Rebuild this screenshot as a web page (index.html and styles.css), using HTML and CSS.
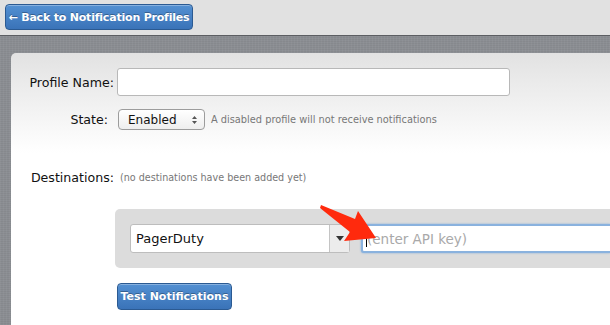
FILE: index.html
```html
<!DOCTYPE html>
<html lang="en">
  <head>
    <meta charset="UTF-8" />
    <title>Edit Notification Profile</title>
    <link rel="stylesheet" href="styles.css">
  </head>
  <body>
    <header class="topbar">
      <button class="btn-blue back-btn">&larr; Back to Notification Profiles</button>
    </header>

    <main class="backdrop">
      <section class="panel">
        <div class="row row-name">
          <label class="field-label" for="profileName">Profile Name:</label>
          <input type="text" id="profileName" class="text-input" />
        </div>

        <div class="row row-state">
          <label class="field-label state-label" for="state">State:</label>
          <div class="mac-select">
            <span>Enabled</span>
            <svg class="updown" width="7" height="10" viewBox="0 0 7 10">
              <path d="M3.5 1 L6 4 H1 Z M3.5 9 L6 6 H1 Z" fill="#555" />
            </svg>
          </div>
          <span class="hint">A disabled profile will not receive notifications</span>
        </div>

        <div class="row row-dest">
          <span class="field-label dest-label">Destinations:</span>
          <span class="hint">(no destinations have been added yet)</span>
        </div>

        <!-- destination editor -->
        <div class="dest-box">
          <div class="combo">
            <span class="combo-value">PagerDuty</span>
            <span class="combo-caret">
              <svg width="8" height="5" viewBox="0 0 8 5"><path d="M0 0 H8 L4 5 Z" fill="#333" /></svg>
            </span>
          </div>
          <div class="api-input">
            <span class="caret-line"></span>
            <span class="placeholder">(enter API key)</span>
          </div>
        </div>

        <button class="btn-blue test-btn">Test Notifications</button>
      </section>

      <!-- annotation arrow -->
      <svg class="red-arrow" width="70" height="45" viewBox="0 0 70 45">
        <path d="M2 3 L3 0 L37 14 L40 6 L58 33 L26 36 L32 27 Z" fill="#ff2a0d" />
      </svg>
    </main>
  </body>
</html>
```

FILE: styles.css
```css
body {
  margin: 0;
  font-family: "DejaVu Sans", "Liberation Sans", sans-serif;
  background: #e2e2e2;
  overflow: hidden;
}
.topbar {
  height: 36px;
  padding: 4px 0 0 5px;
  box-sizing: border-box;
  background: #e1e1e1;
  border-bottom: 1px solid #5c5e62;
}
.btn-blue {
  font-family: "DejaVu Sans", sans-serif;
  font-weight: bold;
  color: #fff;
  border: 1px solid #2b5a92;
  border-radius: 4px;
  background: linear-gradient(#5390d2, #3a73b8);
  box-shadow: inset 0 1px 0 rgba(255, 255, 255, 0.3);
  text-shadow: 0 -1px 0 rgba(0, 0, 0, 0.3);
  padding: 0;
  cursor: pointer;
}
.back-btn {
  width: 188px;
  height: 26px;
  font-size: 11px;
  letter-spacing: -0.2px;
}
.backdrop {
  position: relative;
  height: 300px;
  padding: 17px 0 0 11px;
  box-sizing: border-box;
  overflow: hidden;
  background-color: #8b8e93;
  background-image:
    repeating-linear-gradient(90deg, rgba(255, 255, 255, 0.04) 0 1px, transparent 1px 3px),
    repeating-linear-gradient(0deg, rgba(0, 0, 0, 0.04) 0 1px, transparent 1px 2px);
}
.panel {
  height: 320px;
  border-radius: 5px 0 0 0;
  background: linear-gradient(#e2e2e2, #ffffff 100px);
  padding-top: 15px;
  box-sizing: border-box;
}
.row {
  display: flex;
  align-items: center;
}
.field-label {
  width: 103px;
  text-align: right;
  margin-right: 3px;
  font-size: 12.6px;
  color: #111;
}
.text-input {
  width: 393px;
  height: 28px;
  box-sizing: border-box;
  border: 1px solid #b8b8b8;
  border-radius: 3px;
  background: #fff;
  padding: 0;
  margin: 0;
}
.row-state {
  margin-top: 13px;
}
.state-label {
  width: 97px;
  margin-right: 10px;
}
.mac-select {
  width: 87px;
  height: 21px;
  box-sizing: border-box;
  display: flex;
  align-items: center;
  justify-content: space-between;
  padding: 0 6px 0 9px;
  border: 1px solid #9c9c9c;
  border-radius: 4px;
  background: linear-gradient(#ffffff, #eeeeee);
  font-size: 12px;
  color: #111;
}
.hint {
  margin-left: 6px;
  font-size: 9.8px;
  color: #777;
}
.row-dest {
  margin-top: 40px;
}
.row-dest .hint {
  margin-left: 3px;
  font-size: 9.6px;
}
.dest-box {
  margin: 24px 0 0 104px;
  height: 59px;
  box-sizing: border-box;
  background: #dcdcdc;
  border-radius: 5px 0 0 5px;
  display: flex;
  align-items: center;
  padding: 0 0 0 15px;
  gap: 11px;
}
.combo {
  width: 220px;
  height: 29px;
  box-sizing: border-box;
  display: flex;
  border: 1px solid #bdbdbd;
  border-radius: 3px;
  background: #fff;
}
.combo-value {
  flex: 1;
  display: flex;
  align-items: center;
  padding-left: 5px;
  font-size: 13px;
  color: #111;
}
.combo-caret {
  width: 19px;
  display: flex;
  align-items: center;
  justify-content: center;
  border-left: 1px solid #c4c4c4;
  background: #ececec;
}
.api-input {
  flex: 1;
  height: 29px;
  box-sizing: border-box;
  display: flex;
  align-items: center;
  border: 2px solid #8ab2de;
  border-right: none;
  border-radius: 3px 0 0 3px;
  background: #fff;
  box-shadow: 0 0 2px #7aa7d9;
  padding-left: 3px;
}
.caret-line {
  width: 1px;
  height: 16px;
  background: #000;
}
.placeholder {
  font-size: 13.5px;
  color: #a9a9a9;
}
.test-btn {
  margin: 15px 0 0 106px;
  width: 115px;
  height: 27px;
  font-size: 11px;
}
.red-arrow {
  position: absolute;
  left: 318px;
  top: 169px;
}
```
